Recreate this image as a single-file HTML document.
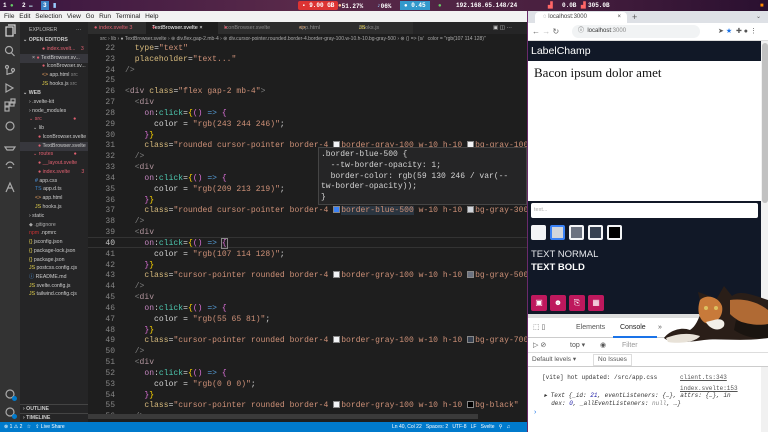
<!DOCTYPE html>
<html><head><meta charset="utf-8"><style>
*{margin:0;padding:0;box-sizing:border-box}
body{width:768px;height:432px;overflow:hidden;position:relative;background:#2a1030;font-family:"Liberation Sans",sans-serif}
.a{position:absolute}
.mono{font-family:"Liberation Mono",monospace}
#top{left:0;top:0;width:768px;height:11px;background:linear-gradient(90deg,#3a1640,#5a2a4a 40%,#4a2040 70%,#2a1030);}
#top span{position:absolute;top:1px;font:bold 6px "Liberation Mono",monospace;color:#fff;line-height:9px;white-space:nowrap}
#menu{left:0;top:11px;width:527px;height:11px;background:#f2f2f2;font-size:6.5px;color:#222;line-height:11px;padding-left:4px;word-spacing:3px}
#act{left:0;top:22px;width:20px;height:400px;background:#333}
#side{left:20px;top:22px;width:68px;height:400px;background:#252526;color:#ccc;font-size:5.2px}
#side div{position:absolute;white-space:nowrap;height:8.6px;line-height:8.6px}
#tabs{left:88px;top:22px;width:439px;height:12px;background:#252526;font-size:5.5px}
#tabs span{position:absolute;top:0;height:12px;line-height:12px;color:#8a8a8a}
#bc{left:88px;top:34px;width:439px;height:10px;background:#1e1e1e;font-size:5px;color:#aaa;line-height:10px;padding-left:12px;white-space:nowrap;overflow:hidden}
#ed{left:88px;top:44px;width:439px;height:378px;background:#1e1e1e;overflow:hidden}
.ln{position:absolute;left:0;width:27px;text-align:right;color:#858585;font:8px/10.83px "Liberation Mono",monospace}
.cd{position:absolute;left:37px;white-space:pre;color:#d4d4d4;font:8px/10.83px "Liberation Mono",monospace;letter-spacing:.04px}
.t{color:#808080}.tg{color:#b0949c}.on{color:#c586c0}.ck{color:#4ec9b0}.s{color:#ce9178}.cl{color:#d7ba7d}.ar{color:#569cd6}.y{color:#ffd700}.p{color:#da70d6}
.sw{display:inline-block;width:7px;height:7px;border:1px solid #888;vertical-align:-1px;margin-right:1px}
#status{left:0;top:422px;width:527px;height:10px;background:#007acc;color:#fff;font-size:5px;line-height:10px}
#br{left:527px;top:11px;width:241px;height:421px;background:#fff;border-left:1px solid #6a2a6a}
</style></head><body>
<div id="top" class="a">
<span style="left:3px">1</span><span style="left:10px;color:#6c6">●</span><span style="left:22px">2</span><span style="left:29px;color:#9ab">▬</span>
<span style="left:41px;background:#3b82c4;padding:0 2px">3</span><span style="left:53px;color:#9cf">▮</span>
<span style="left:298px;background:#d33;padding:0 4px;border-radius:2px">▪ 9.00 GB</span>
<span style="left:338px;color:#fc9">●<span style="color:#fff">51.27%</span></span>
<span style="left:377px;color:#9cf">♪ <span style="color:#fff">06%</span></span>
<span style="left:400px;background:#39c;padding:0 4px">● 0.45</span>
<span style="left:438px;color:#6c6">●</span>
<span style="left:456px">192.168.65.148/24</span><span style="left:548px;color:#f66">▟</span>
<span style="left:562px">0.0B</span><span style="left:581px;color:#f66">▟</span><span style="left:588px">305.0B</span><span style="left:760px;color:#f80">■</span>
</div>
<div id="menu" class="a">File Edit Selection View Go Run Terminal Help</div>
<div id="act" class="a">
<svg width="20" height="400" fill="none" stroke="#aaa" stroke-width="1.2">
<rect x="6" y="5" width="7" height="9" stroke="#ddd"/><path d="M8 3h7v9" stroke="#ddd"/>
<circle cx="9" cy="28" r="3.5"/><path d="M11.5 31l3 3"/>
<circle cx="7" cy="45" r="1.5"/><circle cx="13" cy="48" r="1.5"/><path d="M7 47v6M13 50c0 2-6 1-6 3"/>
<path d="M6 62l7 4-7 4z"/>
<rect x="5" y="80" width="4" height="4"/><rect x="10" y="80" width="4" height="4"/><rect x="5" y="85" width="4" height="4"/><rect x="11" y="77" width="4" height="4"/>
<circle cx="10" cy="104" r="4"/><path d="M5 125h10l-2 3H7z"/><path d="M6 143c2-4 6-4 8 0M8 146c1-1 3-1 4 0"/><path d="M6 170l4-9 4 9M8 166h4"/>
<circle cx="10" cy="372" r="4"/><circle cx="10" cy="390" r="4"/>
</svg>
<div class="a" style="left:12px;top:374px;width:5px;height:5px;border-radius:50%;background:#007acc"></div>
<div class="a" style="left:12px;top:392px;width:5px;height:5px;border-radius:50%;background:#007acc"></div>
</div>
<div id="side" class="a">
<div style="left:9px;top:4px;color:#bbb">EXPLORER</div><div style="left:56px;top:4px">···</div>
<div style="left:3px;top:14px;font-weight:bold">⌄ OPEN EDITORS</div>
<div style="left:22px;top:23px;color:#e06070">● index.svelt... <span style="margin-left:4px">3</span></div>
<div style="left:0;top:32px;width:68px;background:#37373d;padding-left:12px">× <span style="color:#e06070">●</span> TextBrowser.sv...</div>
<div style="left:22px;top:40px"><span style="color:#e06070">●</span> IconBrowser.sv...</div>
<div style="left:22px;top:49px"><span style="color:#e8a060">&lt;&gt;</span> app.html <span style="color:#888">src</span></div>
<div style="left:22px;top:58px"><span style="color:#e8d44d">JS</span> hooks.js <span style="color:#888">src</span></div>
<div style="left:3px;top:67px;font-weight:bold">⌄ WEB</div>
<div style="left:9px;top:76px">› .svelte-kit</div>
<div style="left:9px;top:85px">› node_modules</div>
<div style="left:9px;top:93px;color:#e06070">⌄ src <span style="margin-left:30px">●</span></div>
<div style="left:13px;top:102px">⌄ lib</div>
<div style="left:18px;top:111px"><span style="color:#e06070">●</span> IconBrowser.svelte</div>
<div style="left:0;top:120px;width:68px;background:#37373d;padding-left:18px"><span style="color:#e06070">●</span> TextBrowser.svelte</div>
<div style="left:13px;top:128px;color:#e06070">⌄ routes <span style="margin-left:19px">●</span></div>
<div style="left:18px;top:137px;color:#e06070">● __layout.svelte</div>
<div style="left:18px;top:146px;color:#e06070">● index.svelte <span style="margin-left:10px">3</span></div>
<div style="left:15px;top:155px"><span style="color:#5af">#</span> app.css</div>
<div style="left:15px;top:163px"><span style="color:#3b82c4">TS</span> app.d.ts</div>
<div style="left:15px;top:172px"><span style="color:#e8a060">&lt;&gt;</span> app.html</div>
<div style="left:15px;top:181px"><span style="color:#e8d44d">JS</span> hooks.js</div>
<div style="left:9px;top:190px">› static</div>
<div style="left:9px;top:199px;color:#aaa">◆ .gitignore</div>
<div style="left:9px;top:207px"><span style="color:#c33">npm</span> .npmrc</div>
<div style="left:9px;top:216px"><span style="color:#e8d44d">{}</span> jsconfig.json</div>
<div style="left:9px;top:225px"><span style="color:#e8d44d">{}</span> package-lock.json</div>
<div style="left:9px;top:234px"><span style="color:#e8d44d">{}</span> package.json</div>
<div style="left:9px;top:242px"><span style="color:#e8d44d">JS</span> postcss.config.cjs</div>
<div style="left:9px;top:251px"><span style="color:#5af">ⓘ</span> README.md</div>
<div style="left:9px;top:260px"><span style="color:#e8d44d">JS</span> svelte.config.js</div>
<div style="left:9px;top:268px"><span style="color:#e8d44d">JS</span> tailwind.config.cjs</div>
<div style="left:0;top:382px;width:68px;border-top:1px solid #444;padding-left:3px;font-weight:bold">› OUTLINE</div>
<div style="left:0;top:391px;width:68px;border-top:1px solid #444;padding-left:3px;font-weight:bold">› TIMELINE</div>
</div>
<div id="tabs" class="a">
<span style="left:0;width:58px;background:#2d2d2d;padding-left:6px;color:#e06070">● index.svelte 3</span>
<span style="left:58px;width:72px;background:#1e1e1e;padding-left:6px;color:#fff"><span style="color:#e06070">●</span> TextBrowser.svelte ×</span>
<span style="left:130px;width:75px;background:#2d2d2d;padding-left:6px"><span style="color:#e06070">●</span> IconBrowser.svelte</span>
<span style="left:205px;width:60px;background:#2d2d2d;padding-left:6px"><span style="color:#e8a060">&lt;&gt;</span> app.html</span>
<span style="left:265px;width:60px;background:#2d2d2d;padding-left:6px"><span style="color:#e8d44d">JS</span> hooks.js</span>
<span style="left:405px;color:#ccc">▣ ◫ ···</span>
</div>
<div id="bc" class="a">src › lib › ● TextBrowser.svelte › ⊛ div.flex.gap-2.mb-4 › ⊛ div.cursor-pointer.rounded.border-4.border-gray-100.w-10.h-10.bg-gray-500 › ⊛ () =&gt; {s/ &nbsp; color = "rgb(107 114 128)"</div>
<div id="ed" class="a">
<div class="a" style="left:0;top:193px;width:439px;height:11px;border-top:1px solid #333;border-bottom:1px solid #333"></div>
<div class="ln" style="top:0">22<br>23<br>24<br>25<br>26<br>27<br>28<br>29<br>30<br>31<br>32<br>33<br>34<br>35<br>36<br>37<br>38<br>39<br><span style="color:#c6c6c6">40</span><br>41<br>42<br>43<br>44<br>45<br>46<br>47<br>48<br>49<br>50<br>51<br>52<br>53<br>54<br>55<br>56</div>
<div class="cd" style="top:0">  <span class="cl">type</span>=<span class="s">"text"</span>
  <span class="cl">placeholder</span>=<span class="s">"text..."</span>
<span class="t">/&gt;</span>

<span class="t">&lt;</span><span class="tg">div</span> <span class="cl">class</span>=<span class="s">"flex gap-2 mb-4"</span><span class="t">&gt;</span>
  <span class="t">&lt;</span><span class="tg">div</span>
    <span class="on">on</span>:<span class="ck">click</span>=<span class="y">{</span><span class="p">()</span> <span class="ar">=&gt;</span> <span class="p">{</span>
      color = <span class="s">"rgb(243 244 246)"</span>;
    <span class="p">}</span><span class="y">}</span>
    <span class="cl">class</span>=<span class="s">"rounded cursor-pointer border-4 <i class="sw" style="background:#f3f4f6"></i>border-gray-100 w-10 h-10 <i class="sw" style="background:#f3f4f6"></i>bg-gray-100"</span>
  <span class="t">/&gt;</span>
  <span class="t">&lt;</span><span class="tg">div</span>
    <span class="on">on</span>:<span class="ck">click</span>=<span class="y">{</span><span class="p">()</span> <span class="ar">=&gt;</span> <span class="p">{</span>
      color = <span class="s">"rgb(209 213 219)"</span>;
    <span class="p">}</span><span class="y">}</span>
    <span class="cl">class</span>=<span class="s">"rounded cursor-pointer border-4 <i class="sw" style="background:#3b82f6"></i><span style="background:#2a3540">border-blue-500</span> w-10 h-10 <i class="sw" style="background:#d1d5db"></i>bg-gray-300"</span>
  <span class="t">/&gt;</span>
  <span class="t">&lt;</span><span class="tg">div</span>
    <span class="on">on</span>:<span class="ck">click</span>=<span class="y">{</span><span class="p">()</span> <span class="ar">=&gt;</span> <span class="p" style="outline:1px solid #888">{</span>
      color = <span class="s">"rgb(107 114 128)"</span>;
    <span class="p">}</span><span class="y">}</span>
    <span class="cl">class</span>=<span class="s">"cursor-pointer rounded border-4 <i class="sw" style="background:#f3f4f6"></i>border-gray-100 w-10 h-10 <i class="sw" style="background:#6b7280"></i>bg-gray-500"</span>
  <span class="t">/&gt;</span>
  <span class="t">&lt;</span><span class="tg">div</span>
    <span class="on">on</span>:<span class="ck">click</span>=<span class="y">{</span><span class="p">()</span> <span class="ar">=&gt;</span> <span class="p">{</span>
      color = <span class="s">"rgb(55 65 81)"</span>;
    <span class="p">}</span><span class="y">}</span>
    <span class="cl">class</span>=<span class="s">"cursor-pointer rounded border-4 <i class="sw" style="background:#f3f4f6"></i>border-gray-100 w-10 h-10 <i class="sw" style="background:#374151"></i>bg-gray-700"</span>
  <span class="t">/&gt;</span>
  <span class="t">&lt;</span><span class="tg">div</span>
    <span class="on">on</span>:<span class="ck">click</span>=<span class="y">{</span><span class="p">()</span> <span class="ar">=&gt;</span> <span class="p">{</span>
      color = <span class="s">"rgb(0 0 0)"</span>;
    <span class="p">}</span><span class="y">}</span>
    <span class="cl">class</span>=<span class="s">"cursor-pointer rounded border-4 <i class="sw" style="background:#f3f4f6"></i>border-gray-100 w-10 h-10 <i class="sw" style="background:#000"></i>bg-black"</span>
  <span class="t">/&gt;</span></div>
<div class="a mono" style="left:230px;top:103px;width:209px;height:58px;background:#252526;border:1px solid #454545;color:#d4d4d4;font-size:8px;line-height:10.8px;padding:2px 0 0 2px;white-space:pre">.border-blue-500 {
  --tw-border-opacity: 1;
  border-color: rgb(59 130 246 / var(--
tw-border-opacity));
}</div>
<div class="a" style="left:0;top:370px;width:390px;height:5px;background:#3a3a3a"></div>
</div>
<div id="status" class="a"><span style="margin-left:4px">⊗ 1 ⚠ 2 &nbsp; ☆ &nbsp; ⇪ Live Share</span><span style="position:absolute;left:392px">Ln 40, Col 22 &nbsp; Spaces: 2 &nbsp; UTF-8 &nbsp; LF &nbsp; Svelte &nbsp; ⚲ &nbsp; ♫</span></div>

<div id="br" class="a">
<div class="a" style="left:0;top:0;width:241px;height:12px;background:#dee1e6"></div>
<div class="a" style="left:7px;top:1px;width:92px;height:11px;background:#fff;border-radius:4px 4px 0 0;font-size:6px;line-height:11px;color:#444;padding-left:8px">◌ localhost:3000<span style="position:absolute;right:6px">×</span></div>
<div class="a" style="left:104px;top:0;font-size:9px;color:#555;line-height:12px">+</div>
<div class="a" style="left:228px;top:0;font-size:6px;color:#555;line-height:12px">⌄</div>
<div class="a" style="left:0;top:12px;width:241px;height:18px;background:#fff;border-bottom:1px solid #ddd;font-size:8px;color:#666;line-height:18px"><span style="margin-left:4px">←</span> <span style="color:#bbb">→</span> ↻</div>
<div class="a" style="left:44px;top:14px;width:128px;height:13px;border-radius:7px;background:#f1f3f4;font-size:6px;line-height:13px;padding-left:6px;color:#333">ⓘ &nbsp;localhost<span style="color:#888">:3000</span></div>
<div class="a" style="left:190px;top:13px;font-size:7px;line-height:16px;color:#555">➤ <span style="color:#1a73e8">★</span> &nbsp;✚ ● ⋮</div>
<div class="a" style="left:0;top:30px;width:233px;height:20px;background:#111827;color:#fff;font-size:10.5px;line-height:20px;padding-left:3px">LabelChamp</div>
<div class="a" style="left:6px;top:54px;font-family:'Liberation Serif',serif;font-size:13px;color:#111">Bacon ipsum dolor amet</div>
<div class="a" style="left:233px;top:30px;width:8px;height:391px;background:#f1f1f1"><div style="margin:2px 1px;height:160px;background:#c1c1c1;border-radius:3px"></div></div>
<div class="a" style="left:0;top:190px;width:233px;height:113px;background:#111827"></div>
<div class="a" style="left:3px;top:192px;width:227px;height:15px;background:#fff;border-radius:2px;font-size:5.5px;color:#aaa;line-height:15px;padding-left:3px">text...</div>
<div class="a" style="left:3px;top:214px;width:15px;height:15px;background:#f3f4f6;border:2px solid #f3f4f6;border-radius:2px"></div>
<div class="a" style="left:22px;top:214px;width:15px;height:15px;background:#d1d5db;border:2px solid #3b82f6;border-radius:2px"></div>
<div class="a" style="left:41px;top:214px;width:15px;height:15px;background:#6b7280;border:2px solid #f3f4f6;border-radius:2px"></div>
<div class="a" style="left:60px;top:214px;width:15px;height:15px;background:#374151;border:2px solid #f3f4f6;border-radius:2px"></div>
<div class="a" style="left:79px;top:214px;width:15px;height:15px;background:#000;border:2px solid #f3f4f6;border-radius:2px"></div>
<div class="a" style="left:3px;top:237px;color:#e5e7eb;font-size:9.5px;line-height:13px">TEXT NORMAL<br><b style="color:#fff">TEXT BOLD</b></div>
<div class="a" style="left:3px;top:284px;width:16px;height:16px;background:#be185d;border-radius:2px;color:#fff;font-size:8px;text-align:center;line-height:16px">▣</div>
<div class="a" style="left:22px;top:284px;width:16px;height:16px;background:#be185d;border-radius:2px;color:#fff;font-size:8px;text-align:center;line-height:16px">☻</div>
<div class="a" style="left:41px;top:284px;width:16px;height:16px;background:#be185d;border-radius:2px;color:#fff;font-size:8px;text-align:center;line-height:16px">⎘</div>
<div class="a" style="left:60px;top:284px;width:16px;height:16px;background:#be185d;border-radius:2px;color:#fff;font-size:8px;text-align:center;line-height:16px">▦</div>
<div class="a" style="left:0;top:303px;width:233px;height:4px;background:#ddd"></div>
<div class="a" style="left:0;top:307px;width:241px;height:20px;background:#fff;border-bottom:1px solid #ccc;font-size:7px;color:#555;line-height:20px"><span style="margin-left:5px">⬚ ▯</span><span style="position:absolute;left:48px">Elements</span><span style="position:absolute;left:92px;color:#222">Console</span><span style="position:absolute;left:130px">»</span><span style="position:absolute;left:165px;color:#e8a000">▲</span></div>
<div class="a" style="left:85px;top:325px;width:44px;height:2px;background:#1a73e8"></div>
<div class="a" style="left:0;top:327px;width:241px;height:15px;background:#fff;border-bottom:1px solid #ddd;font-size:7px;color:#555;line-height:15px"><span style="margin-left:5px">▷ ⊘</span><span style="position:absolute;left:42px">top ▾</span><span style="position:absolute;left:72px">◉</span><span style="position:absolute;left:94px;color:#999">Filter</span></div>
<div class="a" style="left:0;top:342px;width:241px;height:14px;background:#fff;border-bottom:1px solid #ccc;font-size:6.5px;color:#555;line-height:14px"><span style="margin-left:4px">Default levels ▾</span><span style="position:absolute;left:65px;border:1px solid #ddd;padding:0 4px;line-height:10px;top:1px">No Issues</span></div>
<div class="a mono" style="left:14px;top:362px;font-size:6px;color:#333;line-height:9px;white-space:pre">[vite] hot updated: /src/app.css</div>
<div class="a mono" style="left:152px;top:362px;font-size:6px;color:#555;text-decoration:underline;line-height:9px">client.ts:343</div>
<div class="a mono" style="left:152px;top:373px;font-size:6px;color:#555;text-decoration:underline;line-height:9px">index.svelte:153</div>
<div class="a mono" style="left:16px;top:381px;font-size:6px;color:#333;line-height:8px;white-space:pre;font-style:italic">▸ Text {_id: <span style="color:#1a1aa6">21</span>, eventListeners: {…}, attrs: {…}, in
  dex: <span style="color:#1a1aa6">0</span>, _allEventListeners: <span style="color:#888">null</span>, …}</div>
<div class="a" style="left:6px;top:398px;font-size:7px;color:#1a73e8">›</div>
</div>
<svg class="a" style="left:640px;top:280px" width="128" height="72" viewBox="0 0 128 72">
<path d="M50 50 C40 46 28 52 24 58 C30 64 50 62 64 60 C80 58 100 62 128 58 V20 C110 14 100 10 92 16 L84 6 L76 20 C70 16 64 14 58 12 L62 30 C58 40 56 46 50 50Z" fill="#2a1e18"/>
<path d="M60 20 C66 14 78 16 82 26 C84 36 76 44 68 44 C60 42 56 32 60 20Z" fill="#c87a3a"/>
<path d="M66 42 C70 50 80 52 84 46 C86 40 80 38 74 40Z" fill="#f2efe8"/>
<path d="M26 58 C36 54 48 52 60 56 C56 62 40 64 28 62Z" fill="#e8e2d8"/>
<path d="M90 20 C104 18 118 22 128 30 V50 C112 48 98 42 90 34Z" fill="#b06a34"/>
<path d="M96 40 C106 44 118 46 128 44 V58 C112 60 100 54 94 50Z" fill="#1a1410"/>
<circle cx="66" cy="28" r="2" fill="#ddc060"/><circle cx="76" cy="28" r="2" fill="#ddc060"/>
</svg>
</body></html>
